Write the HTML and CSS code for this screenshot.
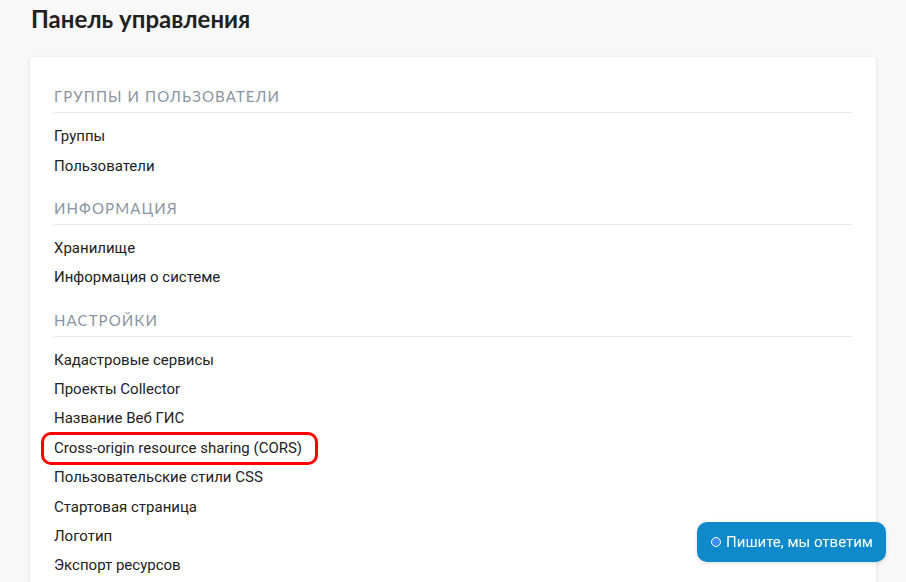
FILE: index.html
```html
<!DOCTYPE html>
<html lang="ru">
<head>
<meta charset="utf-8">
<title>Панель управления</title>
<link rel="stylesheet" href="styles.css">
</head>
<body>
<div class="page">
  <h1 class="title">Панель управления</h1>
  <div class="card">
    <section class="section">
      <h2 class="section-title">Группы и пользователи</h2>
      <ul class="list">
        <li class="item"><a href="#">Группы</a></li>
        <li class="item"><a href="#">Пользователи</a></li>
      </ul>
    </section>
    <section class="section">
      <h2 class="section-title">Информация</h2>
      <ul class="list">
        <li class="item"><a href="#">Хранилище</a></li>
        <li class="item"><a href="#">Информация о системе</a></li>
      </ul>
    </section>
    <section class="section">
      <h2 class="section-title">Настройки</h2>
      <ul class="list">
        <li class="item"><a href="#">Кадастровые сервисы</a></li>
        <li class="item"><a href="#">Проекты Collector</a></li>
        <li class="item"><a href="#">Название Веб ГИС</a></li>
        <li class="item item-marked"><a href="#">Cross-origin resource sharing (CORS)</a></li>
        <li class="item"><a href="#">Пользовательские стили CSS</a></li>
        <li class="item"><a href="#">Стартовая страница</a></li>
        <li class="item"><a href="#">Логотип</a></li>
        <li class="item"><a href="#">Экспорт ресурсов</a></li>
      </ul>
    </section>
  </div>
</div>
<button class="chat"><span class="chat-dot"></span>Пишите, мы ответим</button>
</body>
</html>
```
FILE: styles.css
```css
html, body {
  margin: 0;
  padding: 0;
  background: #f8f8f8;
}
body {
  font-family: Roboto, "Liberation Sans", sans-serif;
  color: #222;
  overflow: hidden;
  height: 582px;
}
.page {
  padding: 4px 30px 0 30px;
}
.title {
  font-family: Lato, "Liberation Sans", sans-serif;
  font-weight: 700;
  font-size: 24px;
  line-height: normal;
  color: #212121;
  margin: 0 0 24px 1px;
}
.card {
  background: #fff;
  border-radius: 4px;
  box-shadow: 0 1px 4px rgba(0, 0, 0, 0.12);
  padding: 29px 24px 40px 24px;
}
.section + .section {
  margin-top: 17px;
}
.section-title {
  font-family: Lato, "Liberation Sans", sans-serif;
  font-weight: 400;
  font-size: 15px;
  line-height: 20px;
  letter-spacing: 1.1px;
  text-transform: uppercase;
  color: #8b95a1;
  margin: 0;
  padding-bottom: 6px;
  border-bottom: 1px solid #e6e8ea;
}
.list {
  list-style: none;
  margin: 9px 0 0 0;
  padding: 0;
}
.item {
  font-size: 15px;
  line-height: 21px;
  padding: 4.2px 0;
}
.item a {
  color: #222;
  text-decoration: none;
}
.item-marked {
  position: relative;
}
.item-marked::after {
  content: "";
  position: absolute;
  left: -13px;
  top: -2px;
  width: 277px;
  height: 33px;
  border: 3px solid #f00;
  border-radius: 10px;
  box-sizing: border-box;
}
.chat {
  position: fixed;
  right: 20px;
  bottom: 20px;
  height: 40px;
  padding: 0 13px 0 14px;
  border: 0;
  border-radius: 10px;
  background: #0e8acb;
  color: #fff;
  font-family: Roboto, "Liberation Sans", sans-serif;
  font-size: 15px;
  display: flex;
  align-items: center;
  gap: 5px;
  box-shadow: 0 1px 4px rgba(0, 0, 0, 0.15);
}
.chat-dot {
  width: 8px;
  height: 8px;
  border-radius: 50%;
  background: #3b8df2;
  border: 1px solid #fff;
}
```
